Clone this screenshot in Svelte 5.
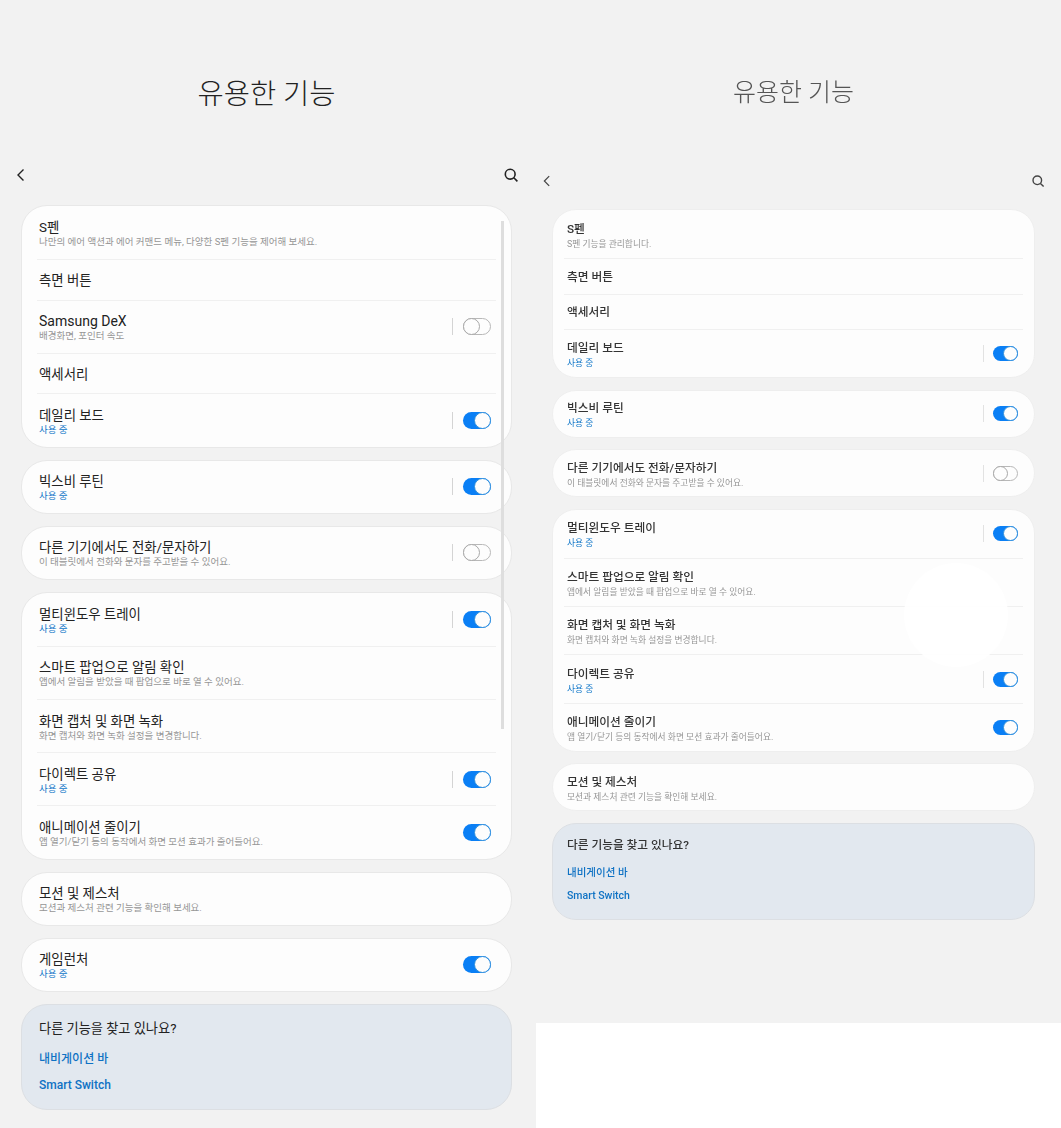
<script>
  const leftGroups = [
    [
      { title: 'S펜', sub: '나만의 에어 액션과 에어 커맨드 메뉴, 다양한 S펜 기능을 제어해 보세요.' },
      { title: '측면 버튼' },
      { title: 'Samsung DeX', latin: true, sub: '배경화면, 포인터 속도', toggle: 'off', sep: true },
      { title: '액세서리' },
      { title: '데일리 보드', on: '사용 중', toggle: 'on', sep: true }
    ],
    [{ title: '빅스비 루틴', on: '사용 중', toggle: 'on', sep: true }],
    [{ title: '다른 기기에서도 전화/문자하기', sub: '이 태블릿에서 전화와 문자를 주고받을 수 있어요.', toggle: 'off', sep: true }],
    [
      { title: '멀티윈도우 트레이', on: '사용 중', toggle: 'on', sep: true },
      { title: '스마트 팝업으로 알림 확인', sub: '앱에서 알림을 받았을 때 팝업으로 바로 열 수 있어요.' },
      { title: '화면 캡처 및 화면 녹화', sub: '화면 캡처와 화면 녹화 설정을 변경합니다.' },
      { title: '다이렉트 공유', on: '사용 중', toggle: 'on', sep: true },
      { title: '애니메이션 줄이기', sub: '앱 열기/닫기 등의 동작에서 화면 모션 효과가 줄어들어요.', toggle: 'on' }
    ],
    [{ title: '모션 및 제스처', sub: '모션과 제스처 관련 기능을 확인해 보세요.' }],
    [{ title: '게임런처', on: '사용 중', toggle: 'on' }]
  ];

  const rightGroups = [
    [
      { title: 'S펜', sub: 'S펜 기능을 관리합니다.' },
      { title: '측면 버튼' },
      { title: '액세서리' },
      { title: '데일리 보드', on: '사용 중', toggle: 'on', sep: true }
    ],
    [{ title: '빅스비 루틴', on: '사용 중', toggle: 'on', sep: true }],
    [{ title: '다른 기기에서도 전화/문자하기', sub: '이 태블릿에서 전화와 문자를 주고받을 수 있어요.', toggle: 'off', sep: true }],
    [
      { title: '멀티윈도우 트레이', on: '사용 중', toggle: 'on', sep: true },
      { title: '스마트 팝업으로 알림 확인', sub: '앱에서 알림을 받았을 때 팝업으로 바로 열 수 있어요.' },
      { title: '화면 캡처 및 화면 녹화', sub: '화면 캡처와 화면 녹화 설정을 변경합니다.' },
      { title: '다이렉트 공유', on: '사용 중', toggle: 'on', sep: true },
      { title: '애니메이션 줄이기', sub: '앱 열기/닫기 등의 동작에서 화면 모션 효과가 줄어들어요.', toggle: 'on' }
    ],
    [{ title: '모션 및 제스처', sub: '모션과 제스처 관련 기능을 확인해 보세요.' }]
  ];
</script>

{#snippet settings(groups)}
  <h1>유용한 기능</h1>
  <div class="toolbar">
    <svg class="icon" viewBox="0 0 16 16" fill="none" stroke="currentColor" stroke-width="1.4">
      <polyline points="10.5,2.5 5,8 10.5,13.5" />
    </svg>
    <svg class="icon" viewBox="0 0 16 16" fill="none" stroke="currentColor" stroke-width="1.6">
      <circle cx="7.2" cy="7.2" r="4.9" />
      <line x1="10.8" y1="10.8" x2="14.4" y2="14.4" />
    </svg>
  </div>
  <div class="groups">
    {#each groups as rows}
      <section class="card">
        {#each rows as row}
          <div class="row">
            <div class="text">
              <div class="title" class:latin={row.latin}>{row.title}</div>
              {#if row.sub}<div class="sub">{row.sub}</div>{/if}
              {#if row.on}<div class="on">{row.on}</div>{/if}
            </div>
            {#if row.sep}<span class="sep"></span>{/if}
            {#if row.toggle}
              <span class="toggle {row.toggle}"><span class="knob"></span></span>
            {/if}
          </div>
        {/each}
      </section>
    {/each}
    <section class="card more">
      <div class="more-title">다른 기능을 찾고 있나요?</div>
      <div class="link">내비게이션 바</div>
      <div class="link">Smart Switch</div>
    </section>
  </div>
{/snippet}

<main class="page">
  <div class="column left">
    {@render settings(leftGroups)}
    <div class="scrollbar"></div>
  </div>
  <div class="side">
    <div class="column right">
      {@render settings(rightGroups)}
      <div class="ripple"></div>
    </div>
    <div class="blank"></div>
  </div>
</main>

<style>
  :global(body) {
    background: #f2f2f2;
  }

  .page {
    display: flex;
    height: 1128px;
    overflow: hidden;
    background: #f2f2f2;
    font-family: Roboto, "Noto Sans CJK KR", sans-serif;
    color: #222;
  }

  .column {
    position: relative;
    box-sizing: border-box;
  }

  .left {
    width: 536px;
    padding: 0 24px 0 21px;
    --title: 13.4px;
    --sub: 9.5px;
    --one: 40.5px;
    --two: 53.2px;
    --lone: 52px;
    --gap: 12px;
    --radius: 26px;
    --pad: 15px;
    --tw: 28px;
    --th: 17px;
    --sep-gap: 10px;
    --sep: #d4d4d4;
  }

  .side {
    width: 525px;
    display: flex;
    flex-direction: column;
  }

  .right {
    height: 1023px;
    padding: 0 26px 0 16px;
    color: #333;
    filter: blur(0.4px);
    --title: 11.7px;
    --sub: 8.75px;
    --one: 35.5px;
    --two: 48.2px;
    --lone: 46px;
    --gap: 11.5px;
    --radius: 24px;
    --pad: 11px;
    --tw: 25px;
    --th: 15px;
    --sep-gap: 9px;
    --sep: #e2e2e2;
  }

  .blank {
    flex: 1;
    background: #fff;
  }

  h1 {
    margin: 0;
    height: 158px;
    padding-top: 73px;
    box-sizing: border-box;
    text-align: center;
    font-size: 28.5px;
    line-height: 44px;
    font-weight: 300;
    color: #222;
  }

  .right h1 {
    height: 163px;
    padding-top: 71px;
    font-size: 25px;
    color: #555;
  }

  .toolbar {
    display: flex;
    justify-content: space-between;
    align-items: center;
    height: 34px;
    margin: 0 -7px 13px -8px;
    color: #222;
  }

  .right .toolbar {
    height: 36px;
    margin: 0 -10px 10px -12px;
    color: #444;
  }

  .icon {
    width: 16px;
    height: 16px;
  }

  .right .icon {
    width: 14px;
    height: 14px;
  }

  .groups {
    display: flex;
    flex-direction: column;
    gap: var(--gap);
  }

  .card {
    box-sizing: border-box;
    background: #fdfdfd;
    border: 1px solid #e8e8e8;
    border-radius: var(--radius);
    padding: 0 var(--pad);
    overflow: hidden;
  }

  .right .card {
    border-color: #eeeeee;
  }

  .row {
    display: flex;
    align-items: center;
    min-height: var(--one);
    box-sizing: border-box;
    border-top: 1px solid #f0f0f0;
  }

  .row:first-child {
    border-top: none;
  }

  .row:has(.sub),
  .row:has(.on) {
    min-height: var(--two);
  }

  .row:only-child {
    min-height: var(--lone);
  }

  .text {
    flex: 1;
    min-width: 0;
    padding-left: 2px;
  }

  .right .text {
    padding-left: 3px;
  }

  .title {
    font-size: var(--title);
    line-height: 21px;
    margin-bottom: -2px;
    color: inherit;
  }

  .title.latin {
    font-size: 14px;
  }

  .right .title {
    font-weight: 500;
    line-height: 20px;
    margin-bottom: -1px;
  }

  .sub {
    font-size: var(--sub);
    line-height: 12px;
    color: #969696;
  }

  .on {
    font-size: var(--sub);
    line-height: 12px;
    color: #0f76c8;
  }

  .sep {
    width: 1px;
    height: 17px;
    margin-right: var(--sep-gap);
    background: var(--sep);
  }

  .toggle {
    position: relative;
    display: block;
    width: var(--tw);
    height: var(--th);
    margin-right: 5px;
    box-sizing: border-box;
    border-radius: 9px;
  }

  .toggle.on {
    background: #0a7ff5;
  }

  .toggle.off {
    border: 1px solid #b8b8b8;
  }

  .knob {
    position: absolute;
    top: 0;
    box-sizing: border-box;
    width: var(--th);
    height: var(--th);
    border-radius: 50%;
    background: #fdfdfd;
  }

  .toggle.on .knob {
    right: 0;
    border: 1px solid #2f8fdc;
  }

  .toggle.off .knob {
    top: -1px;
    left: -1px;
    border: 1px solid #a8a8a8;
  }

  .more {
    background: #e2e8ef;
    height: 106px;
    padding-top: 14px;
    padding-left: 15px;
    border-color: #dcdfe3;
  }

  .right .more {
    height: 97px;
    padding-top: 11px;
    padding-left: 11px;
    border-color: #dcdfe3;
  }

  .more-title {
    font-size: 13.2px;
    line-height: 20px;
    margin-bottom: 13px;
    padding-left: 2px;
    color: inherit;
  }

  .right .more-title {
    font-size: var(--title);
    margin-bottom: 10px;
    padding-left: 3px;
    font-weight: 500;
  }

  .link {
    font-size: 12px;
    line-height: 15px;
    font-weight: 500;
    color: #0f72c4;
    margin-bottom: 11px;
    padding-left: 2px;
  }

  .right .link {
    font-size: 10.5px;
    margin-bottom: 8px;
    padding-left: 3px;
  }

  .scrollbar {
    position: absolute;
    left: 501px;
    top: 221px;
    width: 3px;
    height: 508px;
    background: #dedede;
  }

  .ripple {
    position: absolute;
    left: 368px;
    top: 563px;
    width: 104px;
    height: 104px;
    border-radius: 50%;
    background: #ffffff;
    opacity: 0.9;
  }
</style>
